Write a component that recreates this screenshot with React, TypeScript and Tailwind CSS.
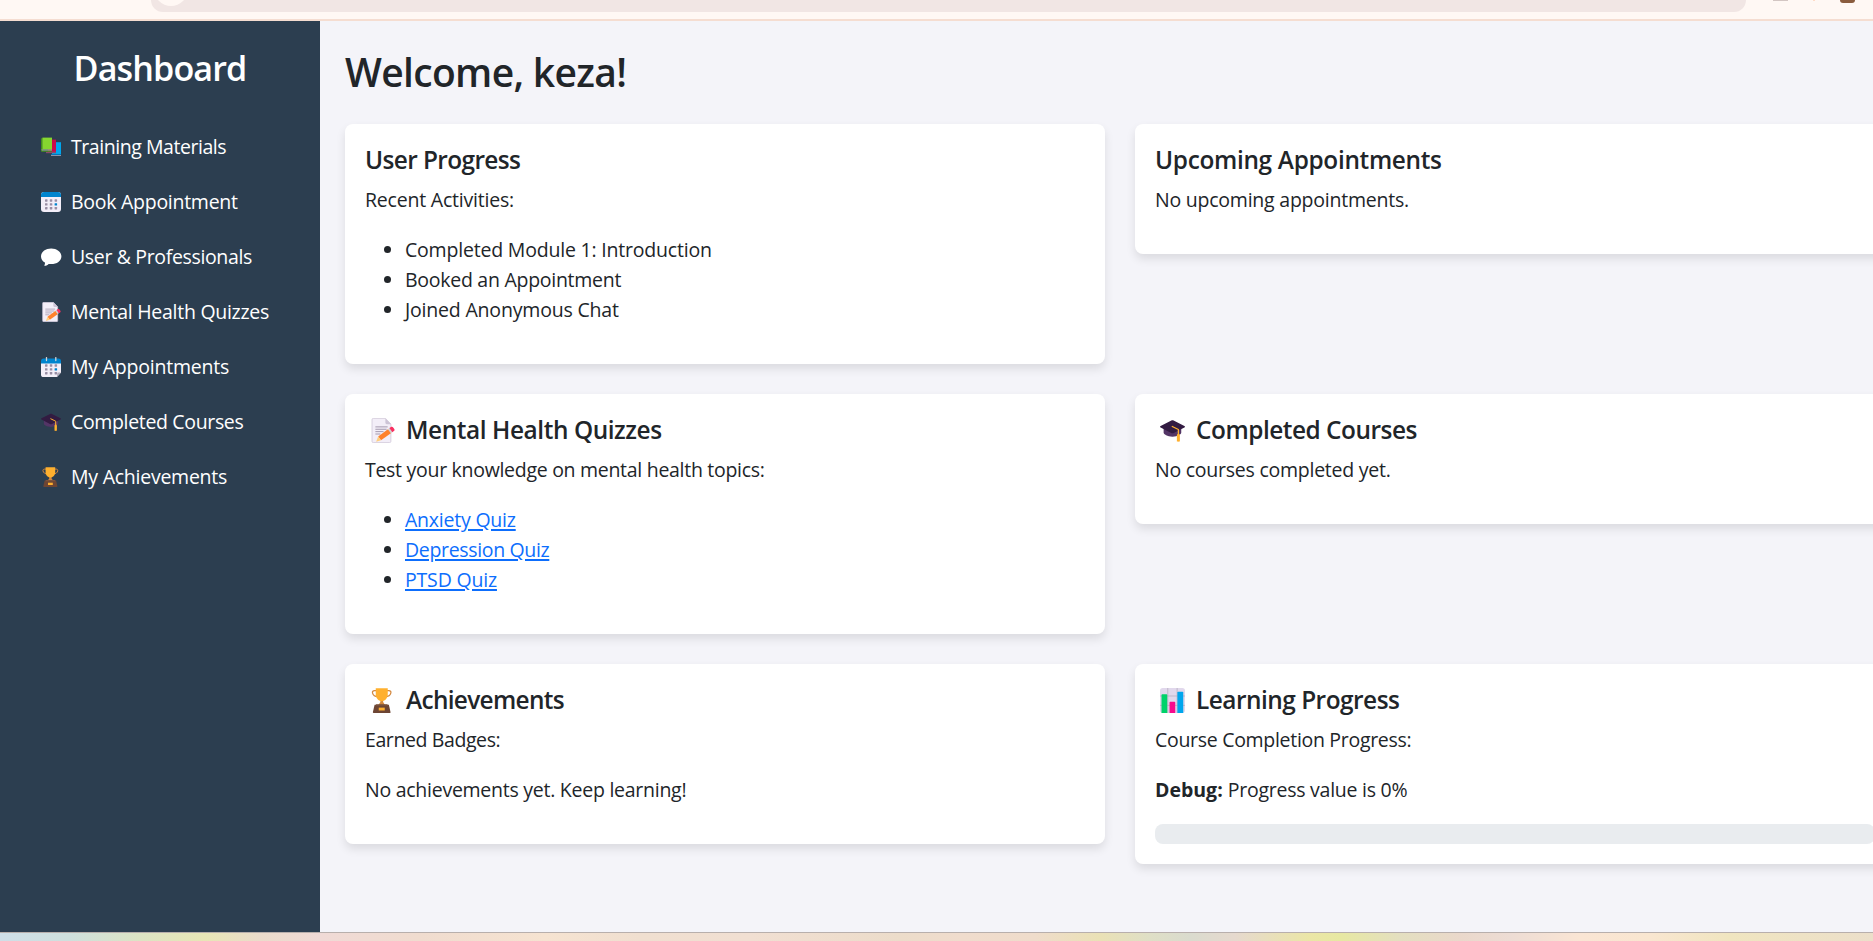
import type { ReactNode } from 'react';

function Books() {
  return (
    <svg viewBox="0 0 20 20" className="block h-full w-full">
      <path d="M11 5.2h9v12.6h-9z" fill="#00a6ed" />
      <path d="M10 17.8h10v1.2H10z" fill="#8a93a8" />
      <path d="M9.6 17h10.4v.9H10.6z" fill="#0074ba" />
      <path d="M7 2.6h8v12.6H7z" fill="#ca0b4a" />
      <path d="M5 14.6h10v1.6H5z" fill="#8c4a6b" />
      <path d="M0 1.2h1.6v13.4H0z" fill="#44911b" />
      <path d="M1.4.6h9.6v12H1.4z" fill="#86d72f" />
      <path d="M.4 12.6H11v1.2H1z" fill="#9aa7a5" />
      <path d="M.4 13.8H11v.9H1z" fill="#44911b" />
    </svg>
  );
}

function Calendar({ spiral = false }: { spiral?: boolean }) {
  const cells = [];
  for (let r = 0; r < 3; r++)
    for (let c = 0; c < 3; c++)
      cells.push(
        <rect key={`${r}${c}`} x={4 + c * 4.8} y={7.3 + r * 3.9} width="2.5" height="2.4" rx=".4" fill={r === 1 && c === 2 ? '#0084ce' : '#998ea4'} />,
      );
  return (
    <svg viewBox="0 0 20 20" className="block h-full w-full">
      {spiral ? (
        <path d="M0 5h20v10.4L16 20H2.6A2.6 2.6 0 0 1 0 17.4z" fill="#f4eff8" />
      ) : (
        <rect width="20" height="20" rx="3" fill="#f3eef8" />
      )}
      <path d={spiral ? 'M0 6.4V4.2a2.6 2.6 0 0 1 2.6-2.6h14.8A2.6 2.6 0 0 1 20 4.2v2.2z' : 'M0 5V3a3 3 0 0 1 3-3h14a3 3 0 0 1 3 3v2z'} fill="#0084ce" />
      {cells}
      {spiral && (
        <>
          <path d="M20 15.4 15.8 20l.4-3.2c.1-.8.6-1.4 1.4-1.4z" fill="#b4acbc" />
          <path d="M5.500.6v3M14.800.6v3" stroke="#d3d3d3" strokeWidth="1.3" strokeLinecap="round" />
        </>
      )}
    </svg>
  );
}

function Speech() {
  return (
    <svg viewBox="0 0 20 20" className="block h-full w-full overflow-visible">
      <path d="M10.2 1.6C4.6 1.6 0 5 0 9.4c0 2.500 1.500 4.700 3.900 6.100.2 1.100 0 2-.5 2.700-.3.400 0 .7.500.6 1.500-.2 2.800-.8 3.700-1.900.8.200 1.700.2 2.600.2 5.700 0 10.200-3.400 10.200-7.700S15.900 1.600 10.200 1.600z" fill="#fff" />
    </svg>
  );
}

function Memo() {
  return (
    <svg viewBox="0 0 20 20" className="block h-full w-full">
      <path d="M2.6.3h9.8l4.300 4.500v13.900c0 .6-.5 1-1 1H2.600c-.6 0-1-.4-1-1V1.300c0-.6.400-1 1-1z" fill="#f3eef8" stroke="#cdc4d6" strokeWidth=".6" />
      <path d="M12.300.3l4.400 4.600h-3.300c-.6 0-1.100-.5-1.100-1.100z" fill="#cdc4d6" />
      <path d="M4.300 7.100h9.800M4.300 9h9M4.300 10.900h6.500M4.300 12.800h4" stroke="#998ea4" strokeWidth=".7" />
      <path d="M14.600 8.700l2.400 3.200-8.200 5.900-2.300-3.100z" fill="#ff822d" />
      <path d="M6.500 14.700l2.300 3.100-3.900 1.100z" fill="#ffce7c" />
      <path d="M14.300 8.900l1.300-1 2.400 3.200-1.300 1z" fill="#d3d3d3" />
      <path d="M15.500 8l1-.7c.8-.5 1.700-.3 2.200.4l.7 1c.4.600.3 1.300-.3 1.700l-1.200.9z" fill="#f92f60" />
    </svg>
  );
}

function Cap() {
  return (
    <svg viewBox="0 0 20 20" className="block h-full w-full">
      <path d="M2.900 8v3.800c0 1.100 2.900 3.100 7.100 3.100s7-2 7-3.100V8z" fill="#533566" />
      <path d="M10 1.800c.3 0 .6.100.9.200l8.600 4.300c.6.300.6.900 0 1.200L11 11.900c-.6.300-1.400.3-2 0L.5 7.500c-.6-.3-.6-.9 0-1.200L9.100 2c.3-.1.600-.2.900-.2z" fill="#321b41" />
      <path d="M9.800 6.800l4.900 2.400v6" fill="none" stroke="#ffb02e" strokeWidth="1" strokeLinecap="round" strokeLinejoin="round" />
      <path d="M14.700 12.600c.7 0 1.200.7 1.200 1.400v4.600c0 .4-2.400.4-2.400 0V14c0-.7.500-1.400 1.200-1.400z" fill="#ffb02e" />
    </svg>
  );
}

function Trophy() {
  return (
    <svg viewBox="0 0 20 20" className="block h-full w-full">
      <path d="M5.400 2.100H3.600C2.500 2.100 1.700 2.800 2 3.900c.4 1.900 2 3 4.600 3.100M13.300 2.100h1.800c1.100 0 1.900.7 1.600 1.800-.4 1.900-2 3-4.600 3.100" fill="none" stroke="#d3883e" strokeWidth="1" />
      <path d="M8.300 9.200h2.200v2l1.500 2.400H6.800l1.500-2.400z" fill="#d3883e" />
      <path d="M4.600.2h9.600v5c0 2.700-2 5.300-4.800 5.300S4.600 7.900 4.600 5.200z" fill="#ffb02e" />
      <path d="M3.700 13.400h11.400l1.300 5.800c.1.500-.1.800-.6.800H2.900c-.5 0-.7-.3-.6-.8z" fill="#6d4534" />
      <path d="M4.900 13h9l.5 1.200h-10z" fill="#7d533c" />
      <path d="M7 15.700h4.800v2.300H7z" fill="#ffb02e" />
    </svg>
  );
}

function BarChart() {
  return (
    <svg viewBox="0 0 20 20" className="block h-full w-full">
      <rect width="20" height="20" rx="2.2" fill="#e1d8ec" />
      <path d="M6.200 0v20M13.700 0v20M0 6.400h20M0 13.900h20" stroke="#b4acbc" strokeWidth=".6" />
      <path d="M1.200 5.600a.6.600 0 0 1 .6-.6h3.400a.6.600 0 0 1 .6.600V20H1.200z" fill="#00d26a" />
      <path d="M7.600 11.600a.6.600 0 0 1 .6-.6h3.400a.6.600 0 0 1 .6.600V20H7.600z" fill="#f70a8d" />
      <path d="M13.900 3.600a.6.600 0 0 1 .6-.6H18a.6.600 0 0 1 .6.600V20h-4.700z" fill="#00a6ed" />
    </svg>
  );
}

function NavItem({ icon, label, spacing }: { icon: ReactNode; label: string; spacing: string }) {
  return (
    <a className="flex h-[55px] items-center pl-[41px] text-white">
      <span className="mr-[10px] h-5 w-5 shrink-0">{icon}</span>
      <span className={`whitespace-nowrap pt-px leading-[30px] ${spacing}`}>{label}</span>
    </a>
  );
}

function Card({ icon, title, spacing, children }: { icon?: ReactNode; title: string; spacing: string; children: ReactNode }) {
  return (
    <section className="rounded-[8px] bg-white px-5 pt-[21px] pb-[19px] shadow-[0_5px_10px_rgba(0,0,0,0.1)]">
      <h3 className="mb-[10px] flex h-[30px] items-center text-[24.4px] leading-[30px] font-semibold">
        {icon && <span className="mr-[11px] ml-[5px] h-[25px] w-[25px] shrink-0">{icon}</span>}
        <span className={`whitespace-nowrap ${spacing}`}>{title}</span>
      </h3>
      {children}
    </section>
  );
}

function Text({ spacing = '', children }: { spacing?: string; children: ReactNode }) {
  return <p className={`mb-5 whitespace-nowrap ${spacing}`}>{children}</p>;
}

const link = 'text-[#0d6efd] underline decoration-[2px] underline-offset-[2px]';

export default function App() {
  return (
    <div className="flex h-[941px] w-full flex-col overflow-hidden bg-[#f4f4f9] font-['Open_Sans','Noto_Sans',sans-serif] text-[19.5px] leading-[30px] text-[#212529]">
      <header className="relative h-[21px] shrink-0 border-b-2 border-[#f5ddd1] bg-[#fff8f4]">
        <div className="ml-[151px] h-3 w-[1595px] overflow-hidden rounded-b-[20px] bg-[#f1e6e4]">
          <div className="ml-[3px] h-[6px] w-[34px] overflow-hidden">
            <div className="-mt-[28px] h-[34px] w-[34px] rounded-full bg-[#fff8f4]" />
          </div>
        </div>
        <div className="absolute top-0 left-[1773px] h-px w-[15px] bg-[#d3c6c3]" />
        <div className="absolute top-0 left-[1813px] h-px w-[2px] bg-[#ffdcc8]" />
        <div className="absolute top-0 left-[1840px] h-[3px] w-[15px] rounded-b-[8px] bg-[#8a5c3e]" />
      </header>

      <div className="flex h-[911px] shrink-0">
        <aside className="w-[320px] shrink-0 bg-[#2c3e50] pt-[26px]">
          <h2 className="mb-[25px] text-center text-[34.1px] leading-[42px] font-semibold tracking-[-0.865px] text-white">Dashboard</h2>
          <nav className="pt-[5px]">
            <NavItem icon={<Books />} label="Training Materials" spacing="tracking-[-0.45px]" />
            <NavItem icon={<Calendar />} label="Book Appointment" spacing="tracking-[-0.272px]" />
            <NavItem icon={<Speech />} label="User & Professionals" spacing="tracking-[-0.351px]" />
            <NavItem icon={<Memo />} label="Mental Health Quizzes" spacing="tracking-[-0.278px]" />
            <NavItem icon={<Calendar spiral />} label="My Appointments" spacing="tracking-[-0.217px]" />
            <NavItem icon={<Cap />} label="Completed Courses" spacing="tracking-[-0.345px]" />
            <NavItem icon={<Trophy />} label="My Achievements" spacing="tracking-[-0.248px]" />
          </nav>
        </aside>

        <main className="min-w-0 flex-1 overflow-hidden pt-[27px] pl-[25px]">
          <h1 className="mb-[28px] text-[39px] leading-[48px] font-semibold tracking-[-0.66px]">Welcome, keza!</h1>
          <div className="grid w-[1550px] grid-cols-2 items-start gap-[30px]">
            <Card title="User Progress" spacing="tracking-[-0.6px]">
              <Text spacing="tracking-[-0.210px]">Recent Activities:</Text>
              <ul className="mb-5 list-disc pl-10">
                <li className="tracking-[-0.196px]">Completed Module 1: Introduction</li>
                <li className="tracking-[-0.27px]">Booked an Appointment</li>
                <li className="tracking-[-0.19px]">Joined Anonymous Chat</li>
              </ul>
            </Card>
            <Card title="Upcoming Appointments" spacing="tracking-[-0.32px]">
              <Text spacing="tracking-[-0.229px]">No upcoming appointments.</Text>
            </Card>
            <Card icon={<Memo />} title="Mental Health Quizzes" spacing="tracking-[-0.42px]">
              <Text spacing="tracking-[-0.29px]">Test your knowledge on mental health topics:</Text>
              <ul className="mb-5 list-disc pl-10">
                <li><a className={`${link} tracking-[-0.22px]`}>Anxiety Quiz</a></li>
                <li><a className={`${link} tracking-[-0.34px]`}>Depression Quiz</a></li>
                <li><a className={`${link} tracking-[-0.178px]`}>PTSD Quiz</a></li>
              </ul>
            </Card>
            <Card icon={<Cap />} title="Completed Courses" spacing="tracking-[-0.48px]">
              <Text spacing="tracking-[-0.245px]">No courses completed yet.</Text>
            </Card>
            <Card icon={<Trophy />} title="Achievements" spacing="tracking-[-0.676px]">
              <Text spacing="tracking-[-0.4px]">Earned Badges:</Text>
              <Text spacing="tracking-[-0.26px]">No achievements yet. Keep learning!</Text>
            </Card>
            <Card icon={<BarChart />} title="Learning Progress" spacing="tracking-[-0.5px]">
              <Text spacing="tracking-[-0.299px]">Course Completion Progress:</Text>
              <Text>
                <strong className="font-bold">Debug:</strong>{' '}
                <span className="tracking-[-0.25px]">Progress value is 0%</span>
              </Text>
              <div className="-mt-px mb-px h-5 rounded-[8px] bg-[#e9ecef]" />
            </Card>
          </div>
        </main>
      </div>

      <footer className="h-[9px] shrink-0 border-t border-[#b8afac] bg-[linear-gradient(90deg,#cfdfe8_0px,#cfe0dd_70px,#dde4c4_140px,#e8e6b6_205px,#ebdccb_260px,#f0dad6_320px,#f0dccf_420px,#f6e3d1_545px,#f0dfd0_640px,#f1dfd2_750px,#ecdcca_900px,#f0dccd_960px,#efdccb_1035px,#eae1b6_1100px,#dfdfc6_1150px,#dadbce_1190px,#e6d9ce_1235px,#ebe6a6_1310px,#e7e8a2_1340px,#e4dfc0_1400px,#ead8cb_1460px,#eddcd4_1510px,#fae5d4_1580px,#f9e6d0_1650px,#f0e5c0_1730px,#ecdfca_1873px)]" />
    </div>
  );
}
